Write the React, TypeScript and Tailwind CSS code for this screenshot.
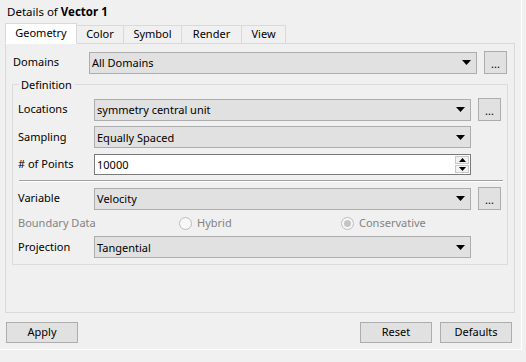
import React from 'react';

const font = { fontFamily: '"Noto Sans", "Liberation Sans", sans-serif' };

const Arrow = () => (
  <svg width="9" height="5" viewBox="0 0 9 5" className="shrink-0">
    <path d="M0 0 H9 L4.5 5 Z" fill="#000" />
  </svg>
);

const Combo = ({ value, width }: { value: string; width: string }) => (
  <div className={`${width} shrink-0 h-[22px] bg-[#e1e1e1] border border-[#adadad] flex items-center justify-between pl-[2px] pr-[5px]`}>
    <span className="leading-none">{value}</span>
    <Arrow />
  </div>
);

const DotsButton = () => (
  <div className="w-[23px] h-[23px] bg-[#e1e1e1] border border-[#adadad] flex items-end justify-center pb-[4px] text-[11px] leading-none">
    ...
  </div>
);

const Radio = ({ label, checked }: { label: string; checked?: boolean }) => (
  <div className="flex items-center gap-[5px] text-[#838383]">
    <div className="w-[13px] h-[13px] rounded-full border border-[#bcbcbc] bg-[#f7f7f7] flex items-center justify-center">
      {checked && <div className="w-[7px] h-[7px] rounded-full bg-[#c4c4c4]" />}
    </div>
    <span>{label}</span>
  </div>
);

const tabs = ['Geometry', 'Color', 'Symbol', 'Render', 'View'];
const tabWidths = ['w-[72px]', 'w-[47px]', 'w-[58px]', 'w-[60px]', 'w-[44px]'];

export default function App() {
  return (
    <div className="w-[526px] h-[362px] bg-[#f0f0f0] text-[11px] text-black overflow-hidden" style={font}>
      <div className="w-[522px] h-[350px] border-r border-b border-white flex flex-col">
        <div className="h-[23px] pl-[7px] pt-[4px] leading-[15px] text-[11.5px]">
          Details of <span className="font-bold">Vector 1</span>
        </div>

        {/* tab bar */}
        <div className="flex items-end pl-[5px] h-[21px] -mb-px relative z-10">
          {tabs.map((t, i) => (
            <div
              key={t}
              className={
                i === 0
                  ? `${tabWidths[i]} h-[21px] bg-white border border-[#d9d9d9] border-b-white flex items-center justify-center`
                  : `${tabWidths[i]} h-[19px] bg-[#f0f0f0] border border-l-0 border-[#d9d9d9] flex items-center justify-center`
              }
            >
              {t}
            </div>
          ))}
        </div>

        {/* tab pane */}
        <div className="ml-[5px] w-[510px] h-[270px] border border-[#d9d9d9] flex flex-col pt-[7px] pl-[6px]">
          <div className="flex items-center h-[23px]">
            <span className="w-[77px] shrink-0 pl-px">Domains</span>
            <Combo value="All Domains" width="w-[388px]" />
            <div className="ml-[7px]">
              <DotsButton />
            </div>
          </div>

          {/* Definition group */}
          <div className="relative mt-[10px] w-[496px] h-[181px] border border-[#dcdcdc] flex flex-col pt-[13px] pl-[5px]">
            <span className="absolute -top-[8px] left-[6px] px-[2px] bg-[#f0f0f0] leading-[15px]">Definition</span>

            <div className="flex items-center h-[23px]">
              <span className="w-[76px] shrink-0">Locations</span>
              <Combo value="symmetry central unit" width="w-[377px]" />
              <div className="ml-[7px]">
                <DotsButton />
              </div>
            </div>

            <div className="flex items-center h-[22px] mt-[5px]">
              <span className="w-[76px] shrink-0">Sampling</span>
              <Combo value="Equally Spaced" width="w-[377px]" />
            </div>

            <div className="flex items-center h-[21px] mt-[6px]">
              <span className="w-[76px] shrink-0"># of Points</span>
              <div className="w-[377px] shrink-0 h-[21px] bg-white border border-[#7a7a7a] flex items-center justify-between pl-[2px] pr-px">
                <span className="leading-none">10000</span>
                <div className="flex flex-col gap-px">
                  <div className="w-[14px] h-[8px] border border-[#c8c8c8] bg-[#f2f2f2] flex items-center justify-center">
                    <svg width="7" height="4" viewBox="0 0 7 4">
                      <path d="M0 4 H7 L3.5 0 Z" fill="#000" />
                    </svg>
                  </div>
                  <div className="w-[14px] h-[8px] border border-[#c8c8c8] bg-[#f2f2f2] flex items-center justify-center">
                    <svg width="7" height="4" viewBox="0 0 7 4">
                      <path d="M0 0 H7 L3.5 4 Z" fill="#000" />
                    </svg>
                  </div>
                </div>
              </div>
            </div>

            <div className="mt-[5px] ml-px w-[484px] h-[2px] border-t border-[#a0a0a0] border-b border-b-white" />

            <div className="flex items-center h-[23px] mt-[5px]">
              <span className="w-[76px] shrink-0">Variable</span>
              <Combo value="Velocity" width="w-[377px]" />
              <div className="ml-[7px]">
                <DotsButton />
              </div>
            </div>

            <div className="flex items-center h-[26px]">
              <span className="w-[161px] shrink-0 text-[#838383]">Boundary Data</span>
              <div className="w-[162px] shrink-0">
                <Radio label="Hybrid" />
              </div>
              <Radio label="Conservative" checked />
            </div>

            <div className="flex items-center h-[22px]">
              <span className="w-[76px] shrink-0">Projection</span>
              <Combo value="Tangential" width="w-[377px]" />
            </div>
          </div>
        </div>

        {/* bottom buttons */}
        <div className="flex items-center mt-[8px] pl-[6px] pr-[9px] h-[22px]">
          <div className="w-[72px] h-[21px] bg-[#e1e1e1] border border-[#adadad] flex items-center justify-center">Apply</div>
          <div className="flex-1" />
          <div className="w-[72px] h-[21px] bg-[#e1e1e1] border border-[#adadad] flex items-center justify-center">Reset</div>
          <div className="ml-[8px] w-[72px] h-[21px] bg-[#e1e1e1] border border-[#adadad] flex items-center justify-center">Defaults</div>
        </div>
      </div>
    </div>
  );
}
